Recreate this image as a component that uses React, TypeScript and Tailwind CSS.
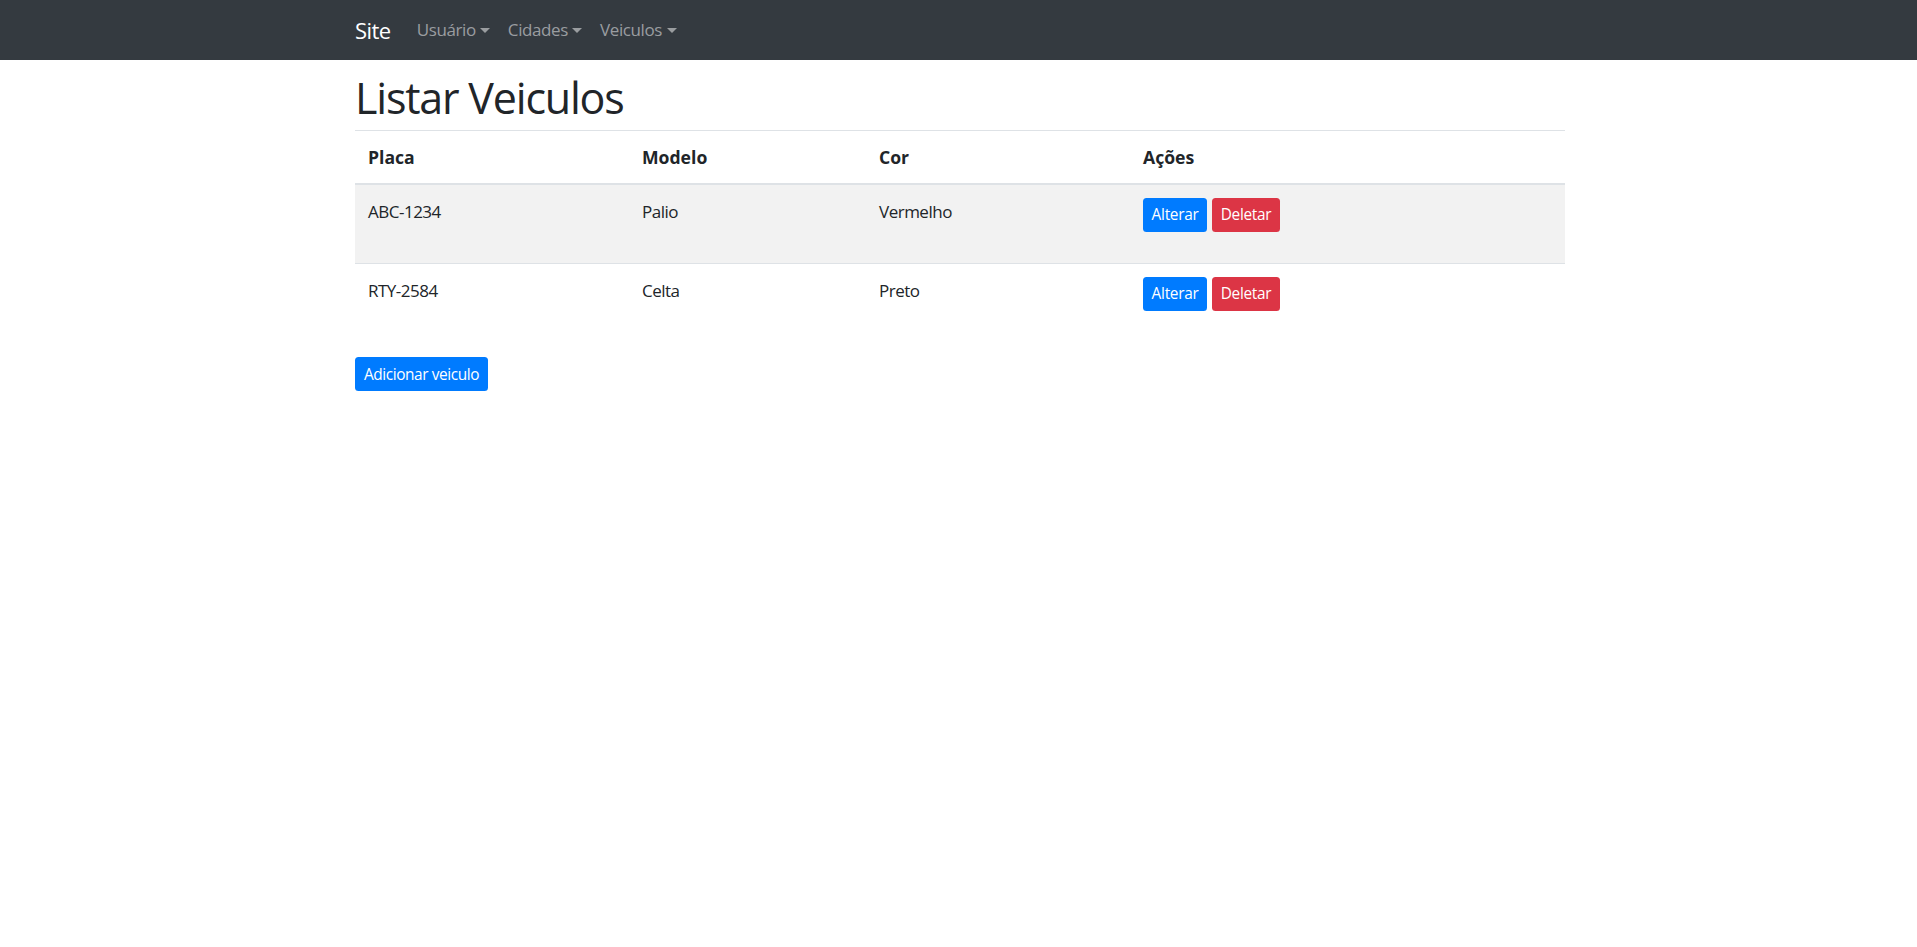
import React from 'react';

interface Veiculo {
  placa: string;
  modelo: string;
  cor: string;
}

const veiculos: Veiculo[] = [
  { placa: 'ABC-1234', modelo: 'Palio', cor: 'Vermelho' },
  { placa: 'RTY-2584', modelo: 'Celta', cor: 'Preto' },
];

const NavDropdown: React.FC<{ label: string }> = ({ label }) => (
  <a className="flex items-center px-[8.8px] text-[17px] tracking-[-0.4px] leading-[26px] text-[#9a9da0] cursor-pointer">
    {label}
    <span className="ml-[4.5px] mt-[1px] inline-block w-0 h-0 border-t-[5.3px] border-t-[#9a9da0] border-x-[5.3px] border-x-transparent" />
  </a>
);

const App: React.FC = () => {
  return (
    <div className="min-h-screen bg-white text-[#212529]" style={{ fontFamily: '"Segoe UI", "Open Sans", sans-serif' }}>
      {/* Navbar */}
      <nav className="h-[60px] bg-[#343a40]">
        <div className="w-[1210px] h-full ml-[355px] flex items-center">
          <a className="mr-[17.5px] text-[22px] tracking-[-0.6px] leading-[33px] text-white cursor-pointer">Site</a>
          <NavDropdown label="Usuário" />
          <NavDropdown label="Cidades" />
          <NavDropdown label="Veiculos" />
        </div>
      </nav>

      <div className="w-[1210px] ml-[355px]">
        <h1 className="pt-[11px] mb-[6px] text-[43px] tracking-[-1.2px] leading-[53px] font-normal">Listar Veiculos</h1>

        {/* Table */}
        <table className="w-full border-collapse mb-[16px] text-[17px] leading-[26px]">
          <thead>
            <tr className="text-[17.6px]">
              <th className="w-[274px] px-[13px] py-[13px] text-left align-bottom font-bold border-t border-b-2 border-[#dee2e6]">Placa</th>
              <th className="w-[237px] px-[13px] py-[13px] text-left align-bottom font-bold border-t border-b-2 border-[#dee2e6]">Modelo</th>
              <th className="w-[264px] px-[13px] py-[13px] text-left align-bottom font-bold border-t border-b-2 border-[#dee2e6]">Cor</th>
              <th className="px-[13px] py-[13px] text-left align-bottom font-bold border-t border-b-2 border-[#dee2e6]">Ações</th>
            </tr>
          </thead>
          <tbody>
            {veiculos.map((v, i) => (
              <tr key={v.placa} className={i % 2 === 0 ? 'bg-[#f2f2f2]' : ''}>
                <td className="px-[13px] pt-[14px] pb-[13px] align-top border-t border-[#dee2e6] tracking-[-0.5px]">{v.placa}</td>
                <td className="px-[13px] pt-[14px] pb-[13px] align-top border-t border-[#dee2e6] tracking-[-0.5px]">{v.modelo}</td>
                <td className="px-[13px] pt-[14px] pb-[13px] align-top border-t border-[#dee2e6] tracking-[-0.5px]">{v.cor}</td>
                <td className="px-[13px] py-[13px] align-top border-t border-[#dee2e6]">
                  <div className="flex gap-[5px] mb-[17.6px]">
                    <button className="h-[34px] w-[64px] rounded-[3.5px] bg-[#007bff] text-white text-[15.4px] tracking-[-0.3px]">Alterar</button>
                    <button className="h-[34px] w-[68px] rounded-[3.5px] bg-[#dc3545] text-white text-[15.4px] tracking-[-0.3px]">Deletar</button>
                  </div>
                </td>
              </tr>
            ))}
          </tbody>
        </table>

        <button className="h-[34px] w-[133px] rounded-[3.5px] bg-[#007bff] text-white text-[15.4px] tracking-[-0.4px]">Adicionar veiculo</button>
      </div>
    </div>
  );
};

export default App;
